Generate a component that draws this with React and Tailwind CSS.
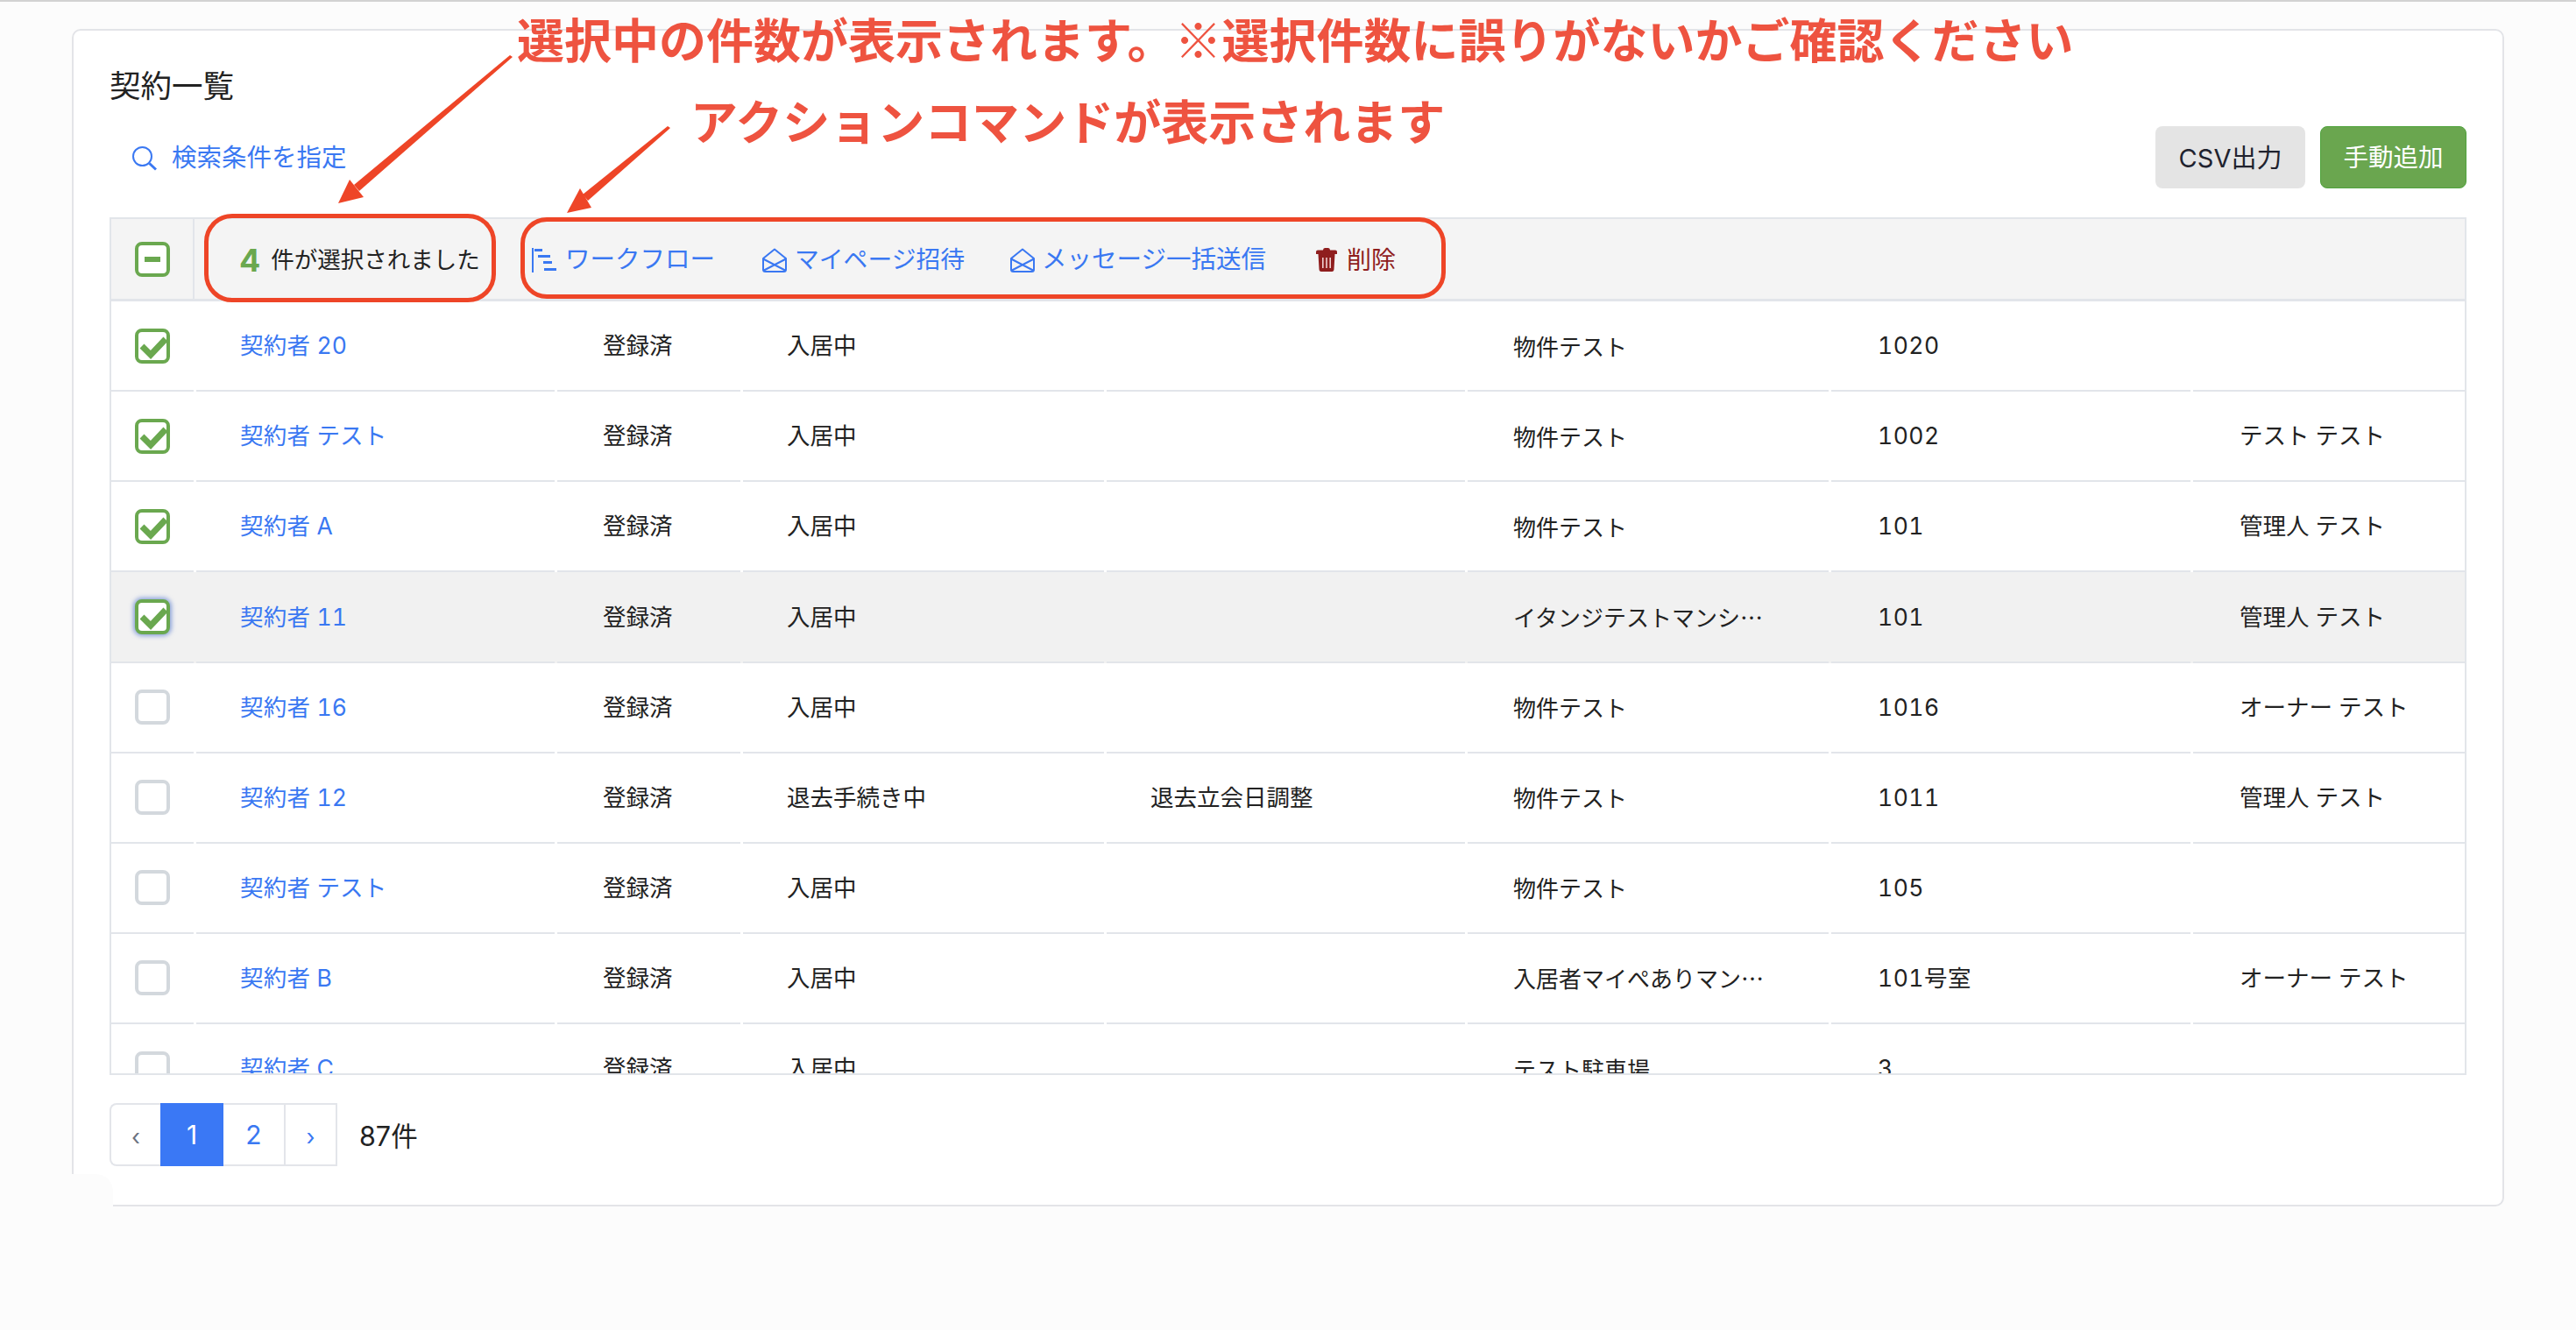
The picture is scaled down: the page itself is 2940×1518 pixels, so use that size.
const FONT = "font-['Inter','Noto_Sans_CJK_JP',sans-serif]";

const rows = [
  { name: "契約者 20", state: "checked", c3: "登録済", c4: "入居中", c5: "", c6: "物件テスト", c7: "1020", c8: "" },
  { name: "契約者 テスト", state: "checked", c3: "登録済", c4: "入居中", c5: "", c6: "物件テスト", c7: "1002", c8: "テスト テスト" },
  { name: "契約者 A", state: "checked", c3: "登録済", c4: "入居中", c5: "", c6: "物件テスト", c7: "101", c8: "管理人 テスト" },
  { name: "契約者 11", state: "focus", c3: "登録済", c4: "入居中", c5: "", c6: "イタンジテストマンション", c7: "101", c8: "管理人 テスト", hover: true },
  { name: "契約者 16", state: "empty", c3: "登録済", c4: "入居中", c5: "", c6: "物件テスト", c7: "1016", c8: "オーナー テスト" },
  { name: "契約者 12", state: "empty", c3: "登録済", c4: "退去手続き中", c5: "退去立会日調整", c6: "物件テスト", c7: "1011", c8: "管理人 テスト" },
  { name: "契約者 テスト", state: "empty", c3: "登録済", c4: "入居中", c5: "", c6: "物件テスト", c7: "105", c8: "" },
  { name: "契約者 B", state: "empty", c3: "登録済", c4: "入居中", c5: "", c6: "入居者マイぺありマンション", c7: "101号室", c8: "オーナー テスト" },
  { name: "契約者 C", state: "empty", c3: "登録済", c4: "入居中", c5: "", c6: "テスト駐車場", c7: "3", c8: "" },
];

function Checkbox({ state }) {
  if (state === "empty") {
    return <div className="w-[40px] h-[40px] rounded-[8px] border-[4px] border-[#d3d8dd] bg-white" />;
  }
  const ring = state === "focus" ? "shadow-[0_0_5px_2px_rgba(58,100,200,0.55)]" : "";
  return (
    <div className={`relative w-[40px] h-[40px] rounded-[8px] border-[4px] border-[#6aa84f] bg-white ${ring}`}>
      {state === "dash" ? (
        <div className="absolute left-[7px] top-[13px] w-[18px] h-[6px] bg-[#6aa84f]" />
      ) : (
        <svg className="absolute left-[-4px] top-[-4px]" width="40" height="40" viewBox="0 0 40 40">
          <path d="M8 20 L18 30 L35 12" fill="none" stroke="#6aa84f" strokeWidth="7" />
        </svg>
      )}
    </div>
  );
}

function Cell({ w, children, className = "" }) {
  return (
    <div className={`${w} shrink-0 h-full flex items-center pl-[50px] pt-[1px] border-b-[2px] border-[#e2e5ea] ${className}`}>
      {children}
    </div>
  );
}

function Row({ r }) {
  return (
    <div className={`flex gap-[3px] h-[103.125px] text-[26.5px] text-[#222222] tabular-nums ${r.hover ? "bg-[#f1f1f1]" : "bg-white"}`}>
      <div className="w-[94px] shrink-0 h-full flex items-center justify-center border-b-[2px] border-[#e2e5ea]">
        <Checkbox state={r.state} />
      </div>
      <Cell w="w-[409px]"><span className="text-[#3a78f2] tracking-[0.2px]">{r.name}</span></Cell>
      <Cell w="w-[209px]"><span className="ml-[2px]">{r.c3}</span></Cell>
      <Cell w="w-[412px]">{r.c4}</Cell>
      <Cell w="w-[409px]">{r.c5}</Cell>
      <Cell w="w-[412px]"><span className="ml-[2px] block w-[290px] truncate text-[26px] -translate-y-[1px] font-['Noto_Sans_CJK_JP',sans-serif]">{r.c6}</span></Cell>
      <Cell w="w-[410px]"><span className="ml-[3px] tracking-[0.5px]">{r.c7}</span></Cell>
      <Cell w="w-[310px]"><span className="ml-[3px]">{r.c8}</span></Cell>
    </div>
  );
}

function WorkflowIcon() {
  return (
    <svg width="29" height="28" viewBox="0 0 29 28" className="shrink-0">
      <rect x="0" y="0" width="2" height="28" fill="#3a78f2" />
      <rect x="3" y="1" width="9" height="3" fill="#3a78f2" />
      <rect x="7" y="8" width="14" height="3" fill="#3a78f2" />
      <rect x="13" y="15" width="10" height="3" fill="#3a78f2" />
      <rect x="14" y="23" width="14" height="3" fill="#3a78f2" />
    </svg>
  );
}

function MailIcon() {
  return (
    <svg width="28" height="28" viewBox="0 0 28 28" fill="none" stroke="#3a78f2" strokeWidth="2" className="shrink-0">
      <path d="M1 12 L14 1.5 L27 12 V24.5 Q27 27 24.5 27 H3.5 Q1 27 1 24.5 Z" strokeLinejoin="round" />
      <path d="M1 12.5 L27 26 M27 12.5 L1 26" />
    </svg>
  );
}

function TrashIcon() {
  return (
    <svg width="24" height="27" viewBox="0 0 24 27" className="shrink-0">
      <path d="M8 2.5 Q8 0 10 0 H14 Q16 0 16 2.5 H22 Q24 2.5 24 4.5 V7 H0 V4.5 Q0 2.5 2 2.5 Z" fill="#8f1e1e" />
      <path d="M2.5 7 H21.5 L20.5 24 Q20.5 27 18 27 H6 Q3.5 27 3.5 24 Z" fill="#8f1e1e" />
      <rect x="7" y="11" width="1.6" height="12" fill="#eecfcf" />
      <rect x="11.2" y="11" width="1.6" height="12" fill="#eecfcf" />
      <rect x="15.4" y="11" width="1.6" height="12" fill="#eecfcf" />
    </svg>
  );
}

function SearchIcon() {
  return (
    <svg width="28" height="28" viewBox="0 0 28 28" fill="none" stroke="#3a78f2" strokeWidth="2" className="shrink-0">
      <circle cx="11.5" cy="11.5" r="10.5" />
      <path d="M19.5 19.5 L27 26.5" strokeWidth="3" />
    </svg>
  );
}

export default function App() {
  return (
    <div className={`relative h-[1518px] overflow-hidden bg-[#fcfcfc] border-t-[2px] border-[#d2d2d2] pt-[31px] pl-[82px] ${FONT}`}>
      {/* card */}
      <div className="w-[2776px] h-[1344px] bg-white border-[2px] border-[#e3e4e8] rounded-[10px] px-[41px] pt-[42px]">
        <h1 className="text-[35.5px] leading-[44px] text-[#222222] font-normal">契約一覧</h1>

        <div className="mt-[23px] h-[71px] flex items-center justify-between">
          <a className="flex items-center gap-[17px] pl-[26px] pt-[2px] text-[28.5px] text-[#3a78f2]">
            <SearchIcon />
            <span>検索条件を指定</span>
          </a>
          <div className="flex gap-[17px] h-full">
            <button className="w-[171px] h-full pt-[2px] rounded-[8px] bg-[#e4e4e4] text-[29px] text-[#20222e]">CSV出力</button>
            <button className="w-[167px] h-full pt-[2px] rounded-[8px] bg-[#6aa64f] border-[1px] border-[#4fa33c] text-[28.5px] text-white">手動追加</button>
          </div>
        </div>

        {/* table */}
        <div className="mt-[33px] h-[979px] overflow-hidden border-x-[2px] border-y-[2px] border-[#e2e5ea]">
          <div className="flex h-[94px] bg-[#f4f4f4] border-b-[3px] border-[#e2e5ea]">
            <div className="w-[95px] shrink-0 flex items-center justify-center border-r-[2px] border-[#e2e5ea]">
              <Checkbox state="dash" />
            </div>
            <div className="w-[385px] shrink-0 flex items-center pl-[51px] pt-[2px] text-[26.5px] text-[#222222]">
              <span className="text-[36px] font-bold text-[#6aa84f] mr-[12px]">4</span>
              <span>件が選択されました</span>
            </div>
            <div className="flex items-center pt-[2px]">
              <a className="flex items-center gap-[9px] text-[28.5px] text-[#3a78f2]"><WorkflowIcon /><span>ワークフロー</span></a>
              <a className="flex items-center gap-[9px] ml-[54px] text-[27.8px] text-[#3a78f2]"><MailIcon /><span>マイページ招待</span></a>
              <a className="flex items-center gap-[8px] ml-[52px] text-[28.5px] text-[#3a78f2]"><MailIcon /><span>メッセージ一括送信</span></a>
              <a className="flex items-center gap-[11px] ml-[57px] text-[28px] text-[#8f1e1e]"><TrashIcon /><span>削除</span></a>
            </div>
          </div>
          {rows.map((r, i) => <Row key={i} r={r} />)}
        </div>

        {/* pagination */}
        <div className="mt-[32px] flex items-center">
          <div className="flex h-[72px] text-[30px]">
            <div className="w-[58px] flex items-center justify-center pt-[5px] border-[2px] border-r-0 border-[#e3e5ea] rounded-l-[8px] text-[26px] text-[#6b7280]">‹</div>
            <div className="w-[72px] flex items-center justify-center bg-[#3a78f5] text-white">1</div>
            <div className="w-[69px] flex items-center justify-center border-y-[2px] border-[#e3e5ea] text-[#3a78f2]">2</div>
            <div className="w-[61px] flex items-center justify-center pt-[5px] border-[2px] border-[#e3e5ea] text-[26px] text-[#3a78f2]">›</div>
          </div>
          <span className="ml-[25px] mt-[3px] text-[30.5px] text-[#222222]">87件</span>
        </div>
      </div>

      {/* patch at the card's lower-left corner */}
      <div className="absolute left-[70px] top-[1338px] w-[59px] h-[37px] bg-[#fcfcfc] rounded-tr-[20px]" />

      {/* annotations */}
      <svg className="absolute left-0 top-0 pointer-events-none" width="2940" height="400" viewBox="0 0 2940 400">
        <path d="M582 61 L585 63 L410 216 L404 209 Z" fill="#ee4527" />
        <path d="M386 230 L399 203 L415 223 Z" fill="#ee4527" />
        <path d="M762 142 L765 144 L671 227 L665 220 Z" fill="#ee4527" />
        <path d="M647 241 L662 213 L675 235 Z" fill="#ee4527" />
      </svg>
      <div className="absolute left-[233px] top-[242px] w-[333px] h-[101px] rounded-[32px] border-[5px] border-[#ee4527]" />
      <div className="absolute left-[594px] top-[246px] w-[1056px] h-[93px] rounded-[30px] border-[5px] border-[#ee4527]" />
      <div className="absolute left-[590px] top-[10px] text-[54px] leading-[64px] font-bold text-[#ee5340] whitespace-nowrap font-['Noto_Sans_CJK_JP',sans-serif]">選択中の件数が表示されます。※選択件数に誤りがないかご確認ください</div>
      <div className="absolute left-[788px] top-[103px] text-[54px] leading-[64px] font-bold text-[#ee5340] whitespace-nowrap font-['Noto_Sans_CJK_JP',sans-serif]">アクションコマンドが表示されます</div>
    </div>
  );
}
